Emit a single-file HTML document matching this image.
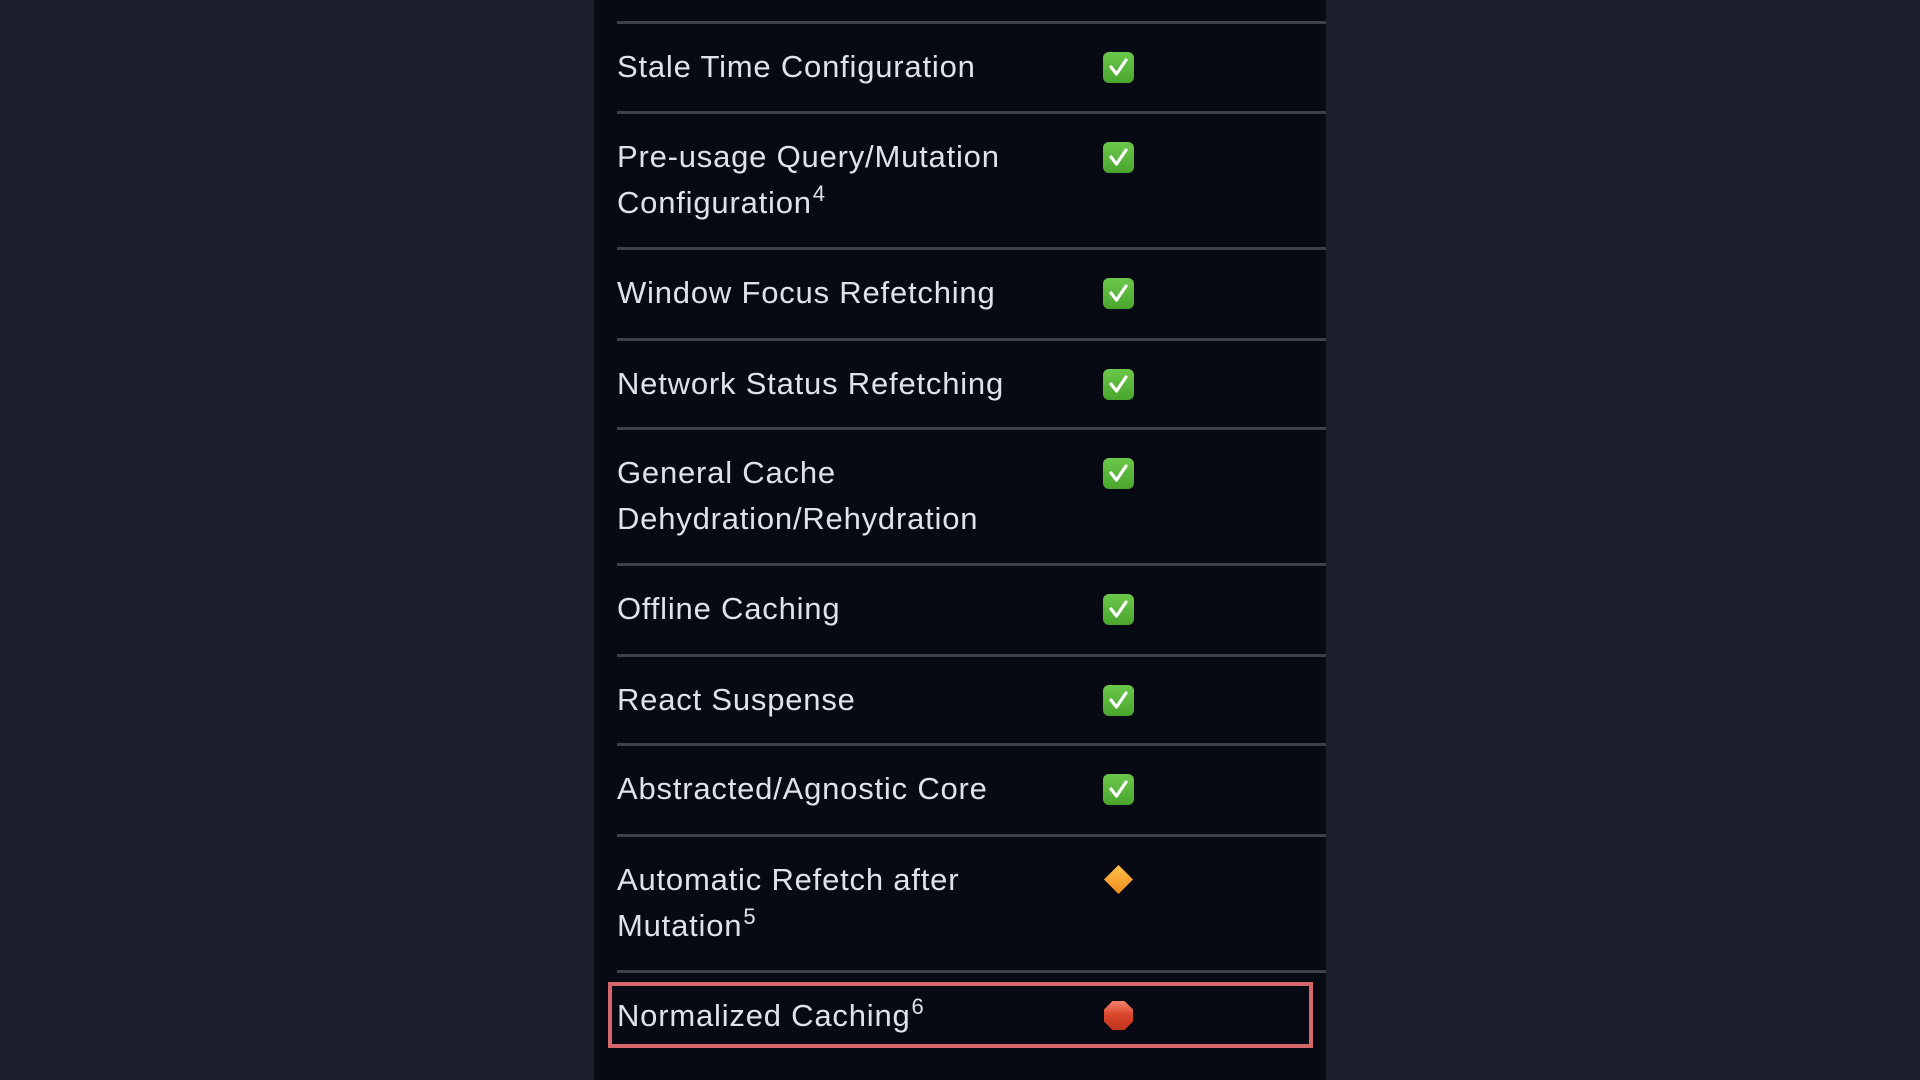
<!DOCTYPE html>
<html><head><meta charset="utf-8">
<style>
html,body{margin:0;padding:0;width:1920px;height:1080px;overflow:hidden;background:#1b1f2b;}
#panel{position:absolute;left:594px;top:0;width:732px;height:1080px;background:#070a12;}
.line{position:absolute;left:617px;width:709px;height:3px;background:#3a404c;}
.t{position:absolute;left:617px;font-family:"Liberation Sans",sans-serif;font-size:31px;line-height:46px;color:#dfe2e8;white-space:nowrap;letter-spacing:0.8px;}
.t sup{font-size:22px;line-height:0;position:relative;top:-1px;margin-left:1px;}
.ic{position:absolute;left:1103px;width:31px;height:31px;}
.chk{background:linear-gradient(#6cc84a,#4aa52e);border-radius:6px;}
</style></head><body>
<div id="panel"></div>
<div class="line" style="top:21px"></div>
<div class="line" style="top:111px"></div>
<div class="line" style="top:247px"></div>
<div class="line" style="top:338px"></div>
<div class="line" style="top:427px"></div>
<div class="line" style="top:563px"></div>
<div class="line" style="top:654px"></div>
<div class="line" style="top:743px"></div>
<div class="line" style="top:834px"></div>
<div class="line" style="top:970px"></div>

<div class="t" style="top:44px">Stale Time Configuration</div>
<div class="t" style="top:134px">Pre-usage Query/Mutation<br>Configuration<sup>4</sup></div>
<div class="t" style="top:270px">Window Focus Refetching</div>
<div class="t" style="top:361px">Network Status Refetching</div>
<div class="t" style="top:450px">General Cache<br>Dehydration/Rehydration</div>
<div class="t" style="top:586px">Offline Caching</div>
<div class="t" style="top:677px">React Suspense</div>
<div class="t" style="top:766px">Abstracted/Agnostic Core</div>
<div class="t" style="top:857px">Automatic Refetch after<br>Mutation<sup>5</sup></div>
<div class="t" style="top:993px">Normalized Caching<sup>6</sup></div>

<div class="ic chk" style="top:52px"><svg width="31" height="31"><path d="M8 15 L13.5 22 L23 8" stroke="#fff" stroke-width="3.2" fill="none" stroke-linecap="round" stroke-linejoin="round"/></svg></div>
<div class="ic chk" style="top:142px"><svg width="31" height="31"><path d="M8 15 L13.5 22 L23 8" stroke="#fff" stroke-width="3.2" fill="none" stroke-linecap="round" stroke-linejoin="round"/></svg></div>
<div class="ic chk" style="top:278px"><svg width="31" height="31"><path d="M8 15 L13.5 22 L23 8" stroke="#fff" stroke-width="3.2" fill="none" stroke-linecap="round" stroke-linejoin="round"/></svg></div>
<div class="ic chk" style="top:369px"><svg width="31" height="31"><path d="M8 15 L13.5 22 L23 8" stroke="#fff" stroke-width="3.2" fill="none" stroke-linecap="round" stroke-linejoin="round"/></svg></div>
<div class="ic chk" style="top:458px"><svg width="31" height="31"><path d="M8 15 L13.5 22 L23 8" stroke="#fff" stroke-width="3.2" fill="none" stroke-linecap="round" stroke-linejoin="round"/></svg></div>
<div class="ic chk" style="top:594px"><svg width="31" height="31"><path d="M8 15 L13.5 22 L23 8" stroke="#fff" stroke-width="3.2" fill="none" stroke-linecap="round" stroke-linejoin="round"/></svg></div>
<div class="ic chk" style="top:685px"><svg width="31" height="31"><path d="M8 15 L13.5 22 L23 8" stroke="#fff" stroke-width="3.2" fill="none" stroke-linecap="round" stroke-linejoin="round"/></svg></div>
<div class="ic chk" style="top:774px"><svg width="31" height="31"><path d="M8 15 L13.5 22 L23 8" stroke="#fff" stroke-width="3.2" fill="none" stroke-linecap="round" stroke-linejoin="round"/></svg></div>
<svg class="ic" style="top:864px" width="31" height="31" viewBox="0 0 31 31"><defs><linearGradient id="g1" x1="0" y1="0" x2="0" y2="1"><stop offset="0" stop-color="#ffc24a"/><stop offset="1" stop-color="#f08a1c"/></linearGradient></defs><path d="M15.5 1 L30 15.5 L15.5 30 L1 15.5 Z" fill="url(#g1)"/></svg>
<svg class="ic" style="top:1000px" width="31" height="31" viewBox="0 0 31 31"><defs><linearGradient id="g2" x1="0" y1="0" x2="0" y2="1"><stop offset="0" stop-color="#f3836a"/><stop offset="0.5" stop-color="#d8442a"/><stop offset="1" stop-color="#c0341e"/></linearGradient></defs><path d="M9.5 1 H21.5 L30 9.5 V21.5 L21.5 30 H9.5 L1 21.5 V9.5 Z" fill="url(#g2)"/></svg>

<div style="position:absolute;left:608px;top:982px;width:697px;height:58px;border:4px solid #d4676a;"></div>
</body></html>
